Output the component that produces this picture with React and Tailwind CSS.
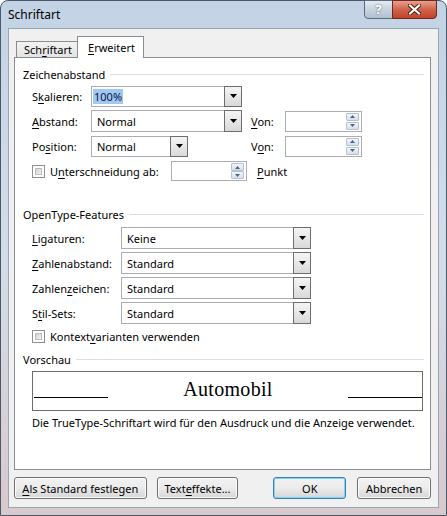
import React from "react";

const font = { fontFamily: '"Noto Sans", "Open Sans", sans-serif' };

function U({ children }) {
  return <span className="underline decoration-1 underline-offset-2">{children}</span>;
}

function Arrow() {
  return (
    <svg width="7" height="4" viewBox="0 0 7 4">
      <path d="M0 0h7L3.5 4z" fill="#000" />
    </svg>
  );
}

function Combo({ value, className, selected }) {
  return (
    <div className={`flex border border-[#abadb3] bg-white ${className}`}>
      <div className="flex flex-1 items-center pl-[1px]">
        {selected ? (
          <span className="bg-[#9fc9f0] px-[1px] text-[#10104a]">{value}</span>
        ) : (
          <span className="pl-[4px]">{value}</span>
        )}
      </div>
      <div className="-my-px -mr-px flex w-[18px] items-center justify-center border border-[#6e6e6e] bg-gradient-to-b from-[#f5f5f5] to-[#d9d9d9]">
        <Arrow />
      </div>
    </div>
  );
}

function SpinBtn({ up }) {
  return (
    <div className="flex h-[8px] w-[13px] items-center justify-center rounded-[1px] border border-[#b6c2cf] bg-gradient-to-b from-[#f2f6fa] to-[#d5dfea]">
      <svg width="5" height="3" viewBox="0 0 5 3">
        <path d={up ? "M0 3h5L2.5 0z" : "M0 0h5L2.5 3z"} fill="#4a6585" />
      </svg>
    </div>
  );
}

function Spin({ className }) {
  return (
    <div className={`flex justify-end border border-[#abadb3] bg-white py-[1px] pr-[2px] ${className}`}>
      <div className="flex flex-col justify-between">
        <SpinBtn up />
        <SpinBtn />
      </div>
    </div>
  );
}

function Check() {
  return (
    <div className="h-[13px] w-[13px] border border-[#8e8f8f] bg-white p-[2px]">
      <div className="h-full w-full border border-[#bdbdbd] bg-gradient-to-br from-[#d0d0d0] to-[#f5f5f5]" />
    </div>
  );
}

function Heading({ children, className }) {
  return (
    <div className={`flex h-[16px] items-center pl-[8px] pr-[6px] ${className}`}>
      <span>{children}</span>
      <div className="ml-[5px] h-px flex-1 bg-[#d5dfe5]" />
    </div>
  );
}

function Button({ children, className, primary }) {
  return (
    <div
      className={`flex h-[22px] items-center justify-center rounded-[3px] border bg-gradient-to-b from-[#f2f2f2] via-[#ebebeb] to-[#d6d6d6] ${
        primary ? "border-[#3c7fb1] shadow-[inset_0_0_0_1px_#7fd3f5]" : "border-[#707070] shadow-[inset_0_0_0_1px_#fbfbfb]"
      } ${className}`}
    >
      {children}
    </div>
  );
}

export default function App() {
  return (
    <div
      className="flex h-[516px] w-[447px] flex-col rounded-t-[8px] border border-[#4a5869] bg-gradient-to-b from-[#c3d3e5] via-[#d3dde8] to-[#d8c9cc] px-[7px] pb-[7px] text-[11px] leading-[15px] text-black"
      style={font}
    >
      <div className="flex h-[27px] items-start justify-between">
        <div className="mt-[6px] text-[12px] leading-[16px] text-[#000]">Schriftart</div>
        <div className="-mt-px mr-[2px] flex h-[19px]">
          <div className="flex w-[29px] items-center justify-center rounded-bl-[4px] border border-[#5c6a7b] bg-gradient-to-b from-[#e4ebf2] via-[#c8d3df] to-[#b3c0cf] text-[13px] font-bold text-white [text-shadow:0_0_2px_#3d4a5a]">
            ?
          </div>
          <div className="-ml-px flex w-[45px] items-center justify-center rounded-br-[4px] border border-[#6a2a1f] bg-gradient-to-b from-[#e8a08d] via-[#d0634b] to-[#c2412a]">
            <svg width="13" height="11" viewBox="0 0 13 11">
              <path d="M2 1.5l9 8M11 1.5l-9 8" stroke="#4a1a12" strokeWidth="4" strokeLinecap="square" />
              <path d="M2 1.5l9 8M11 1.5l-9 8" stroke="#fff" strokeWidth="2.2" strokeLinecap="square" />
            </svg>
          </div>
        </div>
      </div>

      <div className="flex flex-1 flex-col border border-[#98a5b4] bg-[#f0f0f0] pl-[5px] pr-[7px] pt-[7px]">
        <div className="flex h-[21px] items-end">
          <div className="ml-[2px] flex h-[16px] w-[61px] items-center border border-b-0 border-r-0 border-[#898c95] bg-gradient-to-b from-[#f3f3f3] to-[#e3e3e3] pl-[7px]">
            Sch<U>r</U>iftart
          </div>
          <div className="relative z-10 -mb-px flex h-[22px] w-[67px] items-center border border-b-0 border-[#898c95] bg-white pb-[1px] pl-[10px]">
            <U>E</U>rweitert
          </div>
        </div>

        <div className="flex h-[413px] flex-col border border-[#898c95] bg-white pt-[8px]">
          <Heading>Zeichenabstand</Heading>
          <div className="mt-[3px] flex flex-col gap-[3px] pl-[17px]">
            <div className="flex h-[22px] items-center">
              <div className="w-[59px]">
                S<U>k</U>alieren:
              </div>
              <Combo className="h-[21px] w-[151px]" value="100%" selected />
            </div>
            <div className="flex h-[22px] items-center">
              <div className="w-[59px]">
                <U>A</U>bstand:
              </div>
              <Combo className="h-[22px] w-[151px]" value="Normal" />
              <div className="ml-[9px] w-[34px]">
                <U>V</U>on:
              </div>
              <Spin className="h-[21px] w-[77px]" />
            </div>
            <div className="flex h-[22px] items-center">
              <div className="w-[59px]">
                Po<U>s</U>ition:
              </div>
              <Combo className="h-[21px] w-[97px]" value="Normal" />
              <div className="ml-[63px] w-[34px]">
                V<U>o</U>n:
              </div>
              <Spin className="h-[21px] w-[77px]" />
            </div>
            <div className="flex h-[22px] items-center">
              <Check />
              <div className="ml-[5px] w-[121px]">
                U<U>n</U>terschneidung ab:
              </div>
              <Spin className="h-[20px] w-[76px]" />
              <div className="ml-[10px]">
                <U>P</U>unkt
              </div>
            </div>
          </div>

          <Heading className="mt-[24px]">OpenType-Features</Heading>
          <div className="mt-[5px] flex flex-col gap-[3px] pl-[17px]">
            <div className="flex h-[22px] items-center">
              <div className="w-[89px]">
                <U>L</U>igaturen:
              </div>
              <Combo className="h-[22px] w-[190px]" value="Keine" />
            </div>
            <div className="flex h-[22px] items-center">
              <div className="w-[89px]">
                <U>Z</U>ahlenabstand:
              </div>
              <Combo className="h-[22px] w-[190px]" value="Standard" />
            </div>
            <div className="flex h-[22px] items-center">
              <div className="w-[89px]">
                Zahlen<U>z</U>eichen:
              </div>
              <Combo className="h-[22px] w-[190px]" value="Standard" />
            </div>
            <div className="flex h-[22px] items-center">
              <div className="w-[89px]">
                S<U>t</U>il-Sets:
              </div>
              <Combo className="h-[22px] w-[190px]" value="Standard" />
            </div>
            <div className="mt-[1px] flex h-[16px] items-center">
              <Check />
              <div className="ml-[5px]">
                Kontext<U>v</U>arianten verwenden
              </div>
            </div>
          </div>

          <Heading className="mt-[7px]">Vorschau</Heading>
          <div className="ml-[17px] mt-[4px] flex h-[40px] w-[391px] items-start justify-between border border-[#6d6d6d] pl-[1px]">
            <div className="mt-[25px] h-px w-[74px] bg-black" />
            <div
              className="mt-[5px] text-[20px] leading-[24px] tracking-[0.3px]"
              style={{ fontFamily: '"Liberation Serif", serif' }}
            >
              Automobil
            </div>
            <div className="mt-[25px] h-px w-[74px] bg-black" />
          </div>
          <div className="ml-[17px] mt-[4px] leading-[16px]">
            Die TrueType-Schriftart wird für den Ausdruck und die Anzeige verwendet.
          </div>
        </div>

        <div className="mt-[7px] flex">
          <Button className="w-[133px]">
            <span>
              <U>A</U>ls Standard festlegen
            </span>
          </Button>
          <Button className="ml-[10px] w-[82px]">
            <span>
              Text<U>e</U>ffekte...
            </span>
          </Button>
          <Button className="ml-[35px] w-[73px]" primary>
            OK
          </Button>
          <Button className="ml-[11px] w-[74px]">Abbrechen</Button>
        </div>
      </div>
    </div>
  );
}
